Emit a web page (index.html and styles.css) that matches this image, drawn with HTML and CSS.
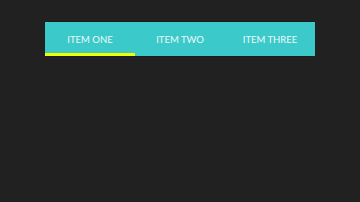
FILE: index.html
```html
<!DOCTYPE html>
<html lang="en">
<head>
  <meta charset="UTF-8">
  <meta name="viewport" content="width=device-width, initial-scale=1.0">
  <title>Tabs</title>
  <link rel="stylesheet" href="styles.css">
</head>
<body>
  <nav class="tabs">
    <a class="tab active" href="#">Item One</a>
    <a class="tab" href="#">Item Two</a>
    <a class="tab" href="#">Item Three</a>
  </nav>
</body>
</html>
```

FILE: styles.css
```css
body {
  margin: 0;
  height: 202px;
  background: #212121;
  font-family: Lato, "Open Sans", sans-serif;
  padding: 22px 45px 0;
  box-sizing: border-box;
}
.tabs {
  display: flex;
  width: 270px;
  height: 34px;
  background: #3cc9c9;
  box-shadow: 0 0 1px rgba(0, 0, 0, 0.6);
}
.tab {
  flex: 1;
  display: flex;
  align-items: center;
  justify-content: center;
  color: #eefafa;
  text-decoration: none;
  text-transform: uppercase;
  font-size: 9.5px;
  box-sizing: border-box;
  padding-top: 1px;
}
.tab.active {
  border-bottom: 3px solid #f2ff00;
  padding-top: 4px;
}
```
